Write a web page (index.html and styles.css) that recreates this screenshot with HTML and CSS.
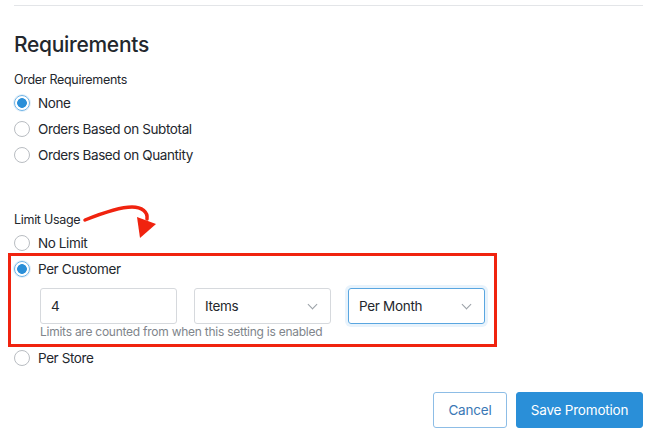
FILE: index.html
```html
<!DOCTYPE html>
<html>
<head>
  <meta charset="utf-8">
  <title>Requirements</title>
  <link rel="stylesheet" href="styles.css">
</head>
<body>
  <div class="page">
    <hr class="divider">
    <h2>Requirements</h2>

    <div class="group">
      <div class="group-label">Order Requirements</div>
      <label class="radio"><span class="dot on"></span>None</label>
      <label class="radio"><span class="dot"></span>Orders Based on Subtotal</label>
      <label class="radio"><span class="dot"></span>Orders Based on Quantity</label>
    </div>

    <div class="group limit">
      <div class="group-label">Limit Usage</div>
      <!-- annotation arrow -->
      <svg class="arrow" width="90" height="45" viewBox="0 0 90 45">
        <path d="M5 20 C 20 14, 38 7, 52 7 C 62 7, 68 12, 67 19" fill="none" stroke="#f0230f" stroke-width="3.5" stroke-linecap="round"/>
        <polygon points="57,17 76,24 60,38" fill="#f0230f"/>
      </svg>
      <label class="radio"><span class="dot"></span>No Limit</label>
      <div class="highlight">
        <label class="radio"><span class="dot on"></span>Per Customer</label>
        <div class="fields">
          <input class="field" type="text" value="4">
          <div class="field select">Items<span class="chev"></span></div>
          <div class="field select focused">Per Month<span class="chev"></span></div>
        </div>
        <div class="hint">Limits are counted from when this setting is enabled</div>
      </div>
      <label class="radio"><span class="dot"></span>Per Store</label>
    </div>

    <div class="actions">
      <button class="btn btn-outline">Cancel</button>
      <button class="btn btn-primary">Save Promotion</button>
    </div>
  </div>
</body>
</html>
```
FILE: styles.css
```css
body {
  margin: 0;
  font-family: Inter, "Noto Sans", sans-serif;
  color: #23272d;
  background: #fff;
}

.page {
  padding: 5px 27px 0 14px;
  position: relative;
}

.divider {
  border: 0;
  border-top: 1px solid #e3e5e8;
  margin: 0;
}

h2 {
  margin: 26px 0 0 0;
  font-size: 21px;
  font-weight: 500;
  line-height: 26px;
  letter-spacing: -0.3px;
}

.group {
  margin-top: 14px;
}

.group-label {
  font-size: 12.5px;
  line-height: 16px;
  margin-bottom: 2px;
  letter-spacing: -0.3px;
}

.radio {
  display: flex;
  align-items: center;
  gap: 8px;
  height: 26px;
  font-size: 13.5px;
  letter-spacing: -0.4px;
}

.dot {
  width: 16px;
  height: 16px;
  border: 1px solid #b9bdc2;
  border-radius: 50%;
  box-sizing: border-box;
  display: inline-block;
}

.dot.on {
  border: 1px solid #6fb3e6;
  background: radial-gradient(circle, #2a8fd8 0 4.5px, #fff 5.2px);
  box-shadow: 0 0 0 1px #e3f0fa;
}

.limit {
  margin-top: 44px;
  position: relative;
}

.arrow {
  position: absolute;
  left: 66px;
  top: -12px;
}

.highlight {
  border: 3px solid #f0230f;
  margin: -3px 146px -2px -6px;
  padding: 0 0 4px 3px;
}

.fields {
  display: flex;
  gap: 17px;
  margin: 6px 0 0 26px;
}

.field {
  width: 137px;
  height: 36px;
  box-sizing: border-box;
  border: 1px solid #d6d9dd;
  border-radius: 3px;
  font-family: inherit;
  font-size: 13.5px;
  letter-spacing: -0.3px;
  color: #23272d;
  padding: 0 10px;
  display: flex;
  align-items: center;
  position: relative;
}

.select {
  justify-content: space-between;
}

.focused {
  border-color: #5aa6e0;
  box-shadow: 0 0 0 3px #e8f3fc;
}

.chev {
  width: 6px;
  height: 6px;
  border-right: 1px solid #9aa0a6;
  border-bottom: 1px solid #9aa0a6;
  transform: rotate(45deg);
  margin: -4px 4px 0 0;
}

.hint {
  font-size: 12px;
  color: #80858b;
  margin: 0 0 0 26px;
  line-height: 16px;
  letter-spacing: -0.25px;
}

.actions {
  display: flex;
  justify-content: flex-end;
  gap: 9px;
  margin-top: 21px;
}

.btn {
  font-family: inherit;
  font-size: 13.5px;
  letter-spacing: -0.2px;
  height: 36px;
  border-radius: 3px;
  padding: 0;
  white-space: nowrap;
}

.btn-outline {
  background: #fff;
  border: 1px solid #8dbde6;
  color: #3a78b5;
  width: 74px;
}

.btn-primary {
  background: #2a8fd8;
  border: 1px solid #2a8fd8;
  color: #fff;
  width: 127px;
}
```
